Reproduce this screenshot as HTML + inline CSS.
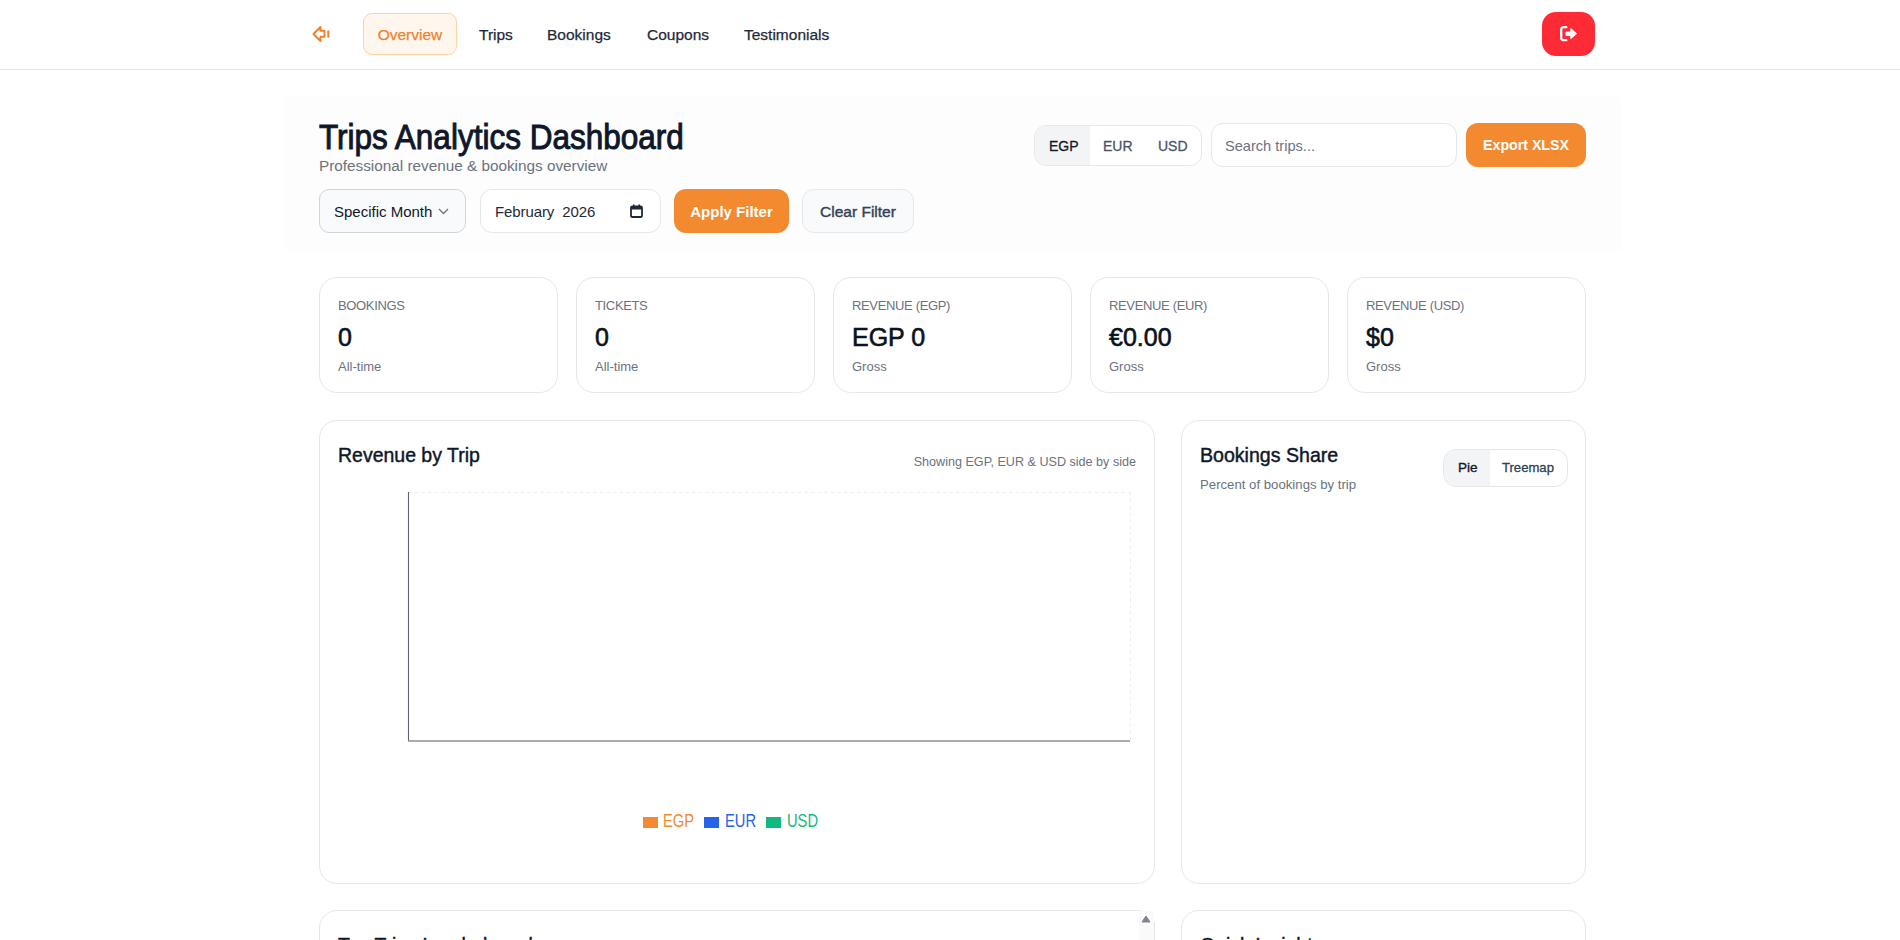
<!DOCTYPE html>
<html>
<head>
<meta charset="utf-8">
<style>
*{box-sizing:border-box;margin:0;padding:0}
html,body{width:1900px;height:940px;overflow:hidden;background:#fff}
body{font-family:"Liberation Sans",sans-serif;color:#0f172a;position:relative}
.t{position:absolute;white-space:nowrap;line-height:1}
/* nav */
.nav{position:absolute;left:0;top:0;width:1900px;height:70px;border-bottom:1px solid #e5e7eb;background:#fff}
.logo{position:absolute;left:300px;top:15px}
.pill{position:absolute;top:13.5px;height:42px;font-size:15.5px;color:#1e293b;-webkit-text-stroke:0.25px #1e293b;line-height:42px;white-space:nowrap}
.pill.active{background:#fff7ed;border:1px solid #fdd3a6;border-radius:9px;color:#f0812e;-webkit-text-stroke:0.25px #f0812e;line-height:40px}
.logout{position:absolute;left:1542px;top:12px;width:53px;height:44px;background:#fe2a36;border-radius:14px}
/* header panel */
.hdr{position:absolute;left:284px;top:97px;width:1337px;height:154px;background:#fdfdfd}
.ctl{position:absolute;height:44px;font-size:15px;line-height:42px;white-space:nowrap}
.btn-o{background:#f38a30;color:#fff;font-weight:bold;border-radius:12px;line-height:45px}
/* cards */
.card{position:absolute;background:#fff;border:1px solid #e5e7eb;border-radius:18px}
.klab{position:absolute;left:18px;top:21px;font-size:13px;color:#6b7280;letter-spacing:-0.35px;white-space:nowrap;line-height:1}
.kval{position:absolute;left:18px;top:47px;font-size:25px;font-weight:normal;-webkit-text-stroke:0.6px #0b1220;color:#0b1220;white-space:nowrap;line-height:1}
.ksub{position:absolute;left:18px;top:82px;font-size:13px;color:#6b7280;white-space:nowrap;line-height:1}
</style>
</head>
<body>
<div class="nav">
  <svg class="logo" width="45" height="40" viewBox="300 15 45 40" fill="none" stroke="#f0812e" stroke-width="2" stroke-linecap="round" stroke-linejoin="round"><path d="M328.3 31.2V36.8"/><path d="M324.5 30.8H320.5V27L313.5 34L320.5 41V36.8H324.5Z"/></svg>
  <div class="pill active" style="left:363px;top:13px;width:94px;text-align:center;line-height:41px">Overview</div>
  <div class="pill" style="left:479px">Trips</div>
  <div class="pill" style="left:547px">Bookings</div>
  <div class="pill" style="left:647px">Coupons</div>
  <div class="pill" style="left:744px">Testimonials</div>
  <div class="logout">
    <svg width="53" height="44" viewBox="0 0 53 44" style="position:absolute;left:0;top:0">
      <path d="M24.3 15.2H21.4A2.2 2.2 0 0 0 19.2 17.4V26A2.2 2.2 0 0 0 21.4 28.2H24.3" fill="none" stroke="#fff" stroke-width="2.3" stroke-linecap="round"/>
      <path d="M24 20H28.8V16.6L34.6 21.7L28.8 26.6V23.5H24Z" fill="#fff" stroke="#fff" stroke-width="1" stroke-linejoin="round"/>
    </svg>
  </div>
</div>

<div class="hdr"></div>
<div class="t" id="title" style="left:319px;top:118.5px;font-size:35px;font-weight:normal;-webkit-text-stroke:1px #0f172a;color:#0f172a;transform:scaleX(0.9);transform-origin:0 0">Trips Analytics Dashboard</div>
<div class="t" id="sub" style="left:319px;top:158px;font-size:15.3px;color:#6b7280">Professional revenue &amp; bookings overview</div>

<div class="ctl" style="left:319px;top:189px;width:147px;background:#f8fafc;border:1px solid #d1d5db;border-radius:10px;padding-left:14px;color:#111827;line-height:43px">Specific Month
  <svg width="11" height="7" viewBox="0 0 11 7" style="position:absolute;left:118px;top:18px"><path d="M1 1l4.5 4.5L10 1" fill="none" stroke="#6b7280" stroke-width="1.3"/></svg>
</div>
<div class="ctl" style="left:480px;top:189px;width:181px;background:#fff;border:1px solid #e5e7eb;border-radius:12px;padding-left:14px;color:#1f2937;line-height:43px;letter-spacing:-0.1px">February&nbsp; 2026
  <svg width="13" height="14" viewBox="0 0 13 14" style="position:absolute;left:149px;top:14px"><rect x="1" y="2.5" width="11" height="10.5" rx="1.3" fill="none" stroke="#1f2937" stroke-width="1.8"/><rect x="1" y="2.5" width="11" height="3" fill="#1f2937"/><rect x="3" y="0.5" width="1.6" height="3" fill="#1f2937"/><rect x="8.4" y="0.5" width="1.6" height="3" fill="#1f2937"/></svg>
</div>
<div class="ctl btn-o" style="left:674px;top:189px;width:115px;text-align:center">Apply Filter</div>
<div class="ctl" style="left:802px;top:189px;width:112px;background:#f8fafc;border:1px solid #e5e7eb;border-radius:12px;text-align:center;color:#334155;font-weight:normal;-webkit-text-stroke:0.4px #334155;line-height:44px;font-size:15.5px">Clear Filter</div>

<!-- right controls -->
<div class="ctl" style="left:1034px;top:125px;width:168px;height:41px;border:1px solid #e5e7eb;border-radius:12px;background:#fff;overflow:hidden">
  <div style="position:absolute;left:0;top:0;width:55px;height:39px;background:#f3f4f6"></div>
  <div class="t" style="left:14px;top:13px;font-size:14px;color:#111827;-webkit-text-stroke:0.3px #111827">EGP</div>
  <div class="t" style="left:68px;top:13px;font-size:14px;color:#475569;-webkit-text-stroke:0.3px #475569">EUR</div>
  <div class="t" style="left:123px;top:13px;font-size:14px;color:#475569;-webkit-text-stroke:0.3px #475569">USD</div>
</div>
<div class="ctl" style="left:1211px;top:123px;width:246px;height:44px;border:1px solid #e5e7eb;border-radius:12px;background:#fff">
  <div class="t" style="left:13px;top:15px;font-size:14.6px;color:#6b7280">Search trips...</div>
</div>
<div class="ctl btn-o" style="left:1466px;top:123px;width:120px;height:44px;border-radius:12px;text-align:center;font-size:14.2px;line-height:44px">Export XLSX</div>

<!-- KPI cards -->
<div class="card" style="left:319px;top:277px;width:239px;height:116px"><div class="klab">BOOKINGS</div><div class="kval">0</div><div class="ksub">All-time</div></div>
<div class="card" style="left:576px;top:277px;width:239px;height:116px"><div class="klab">TICKETS</div><div class="kval">0</div><div class="ksub">All-time</div></div>
<div class="card" style="left:833px;top:277px;width:239px;height:116px"><div class="klab">REVENUE (EGP)</div><div class="kval">EGP 0</div><div class="ksub">Gross</div></div>
<div class="card" style="left:1090px;top:277px;width:239px;height:116px"><div class="klab">REVENUE (EUR)</div><div class="kval">€0.00</div><div class="ksub">Gross</div></div>
<div class="card" style="left:1347px;top:277px;width:239px;height:116px"><div class="klab">REVENUE (USD)</div><div class="kval">$0</div><div class="ksub">Gross</div></div>

<!-- Revenue by trip -->
<div class="card" style="left:319px;top:420px;width:836px;height:464px">
  <div class="t" id="rbt" style="left:18px;top:23.8px;font-size:20.5px;font-weight:normal;-webkit-text-stroke:0.45px #0f172a;color:#0f172a;transform:scaleX(0.95);transform-origin:0 0">Revenue by Trip</div>
  <div class="t" id="rbts" style="right:18px;top:34.8px;font-size:12.6px;color:#6b7280">Showing EGP, EUR &amp; USD side by side</div>
  <svg width="836" height="464" style="position:absolute;left:-1px;top:-1px">
    <line x1="89.5" y1="72.5" x2="811.5" y2="72.5" stroke="#eceef1" stroke-width="1" stroke-dasharray="3.3 3.3"/>
    <line x1="811.5" y1="72.5" x2="811.5" y2="320" stroke="#eceef1" stroke-width="1" stroke-dasharray="3.3 3.3"/>
    <line x1="89.5" y1="72" x2="89.5" y2="321" stroke="#5f636b" stroke-width="1.1"/>
    <line x1="89" y1="321" x2="811" y2="321" stroke="#8e9196" stroke-width="1.6"/>
  </svg>
  <div style="position:absolute;left:323px;top:396px;width:15px;height:11px;background:#f28a33"></div>
  <div class="t" style="left:343px;top:392px;font-size:17.5px;color:#f28a33;transform:scaleX(0.84);transform-origin:0 0">EGP</div>
  <div style="position:absolute;left:384px;top:396px;width:15px;height:11px;background:#2563eb"></div>
  <div class="t" style="left:405px;top:392px;font-size:17.5px;color:#2563eb;transform:scaleX(0.84);transform-origin:0 0">EUR</div>
  <div style="position:absolute;left:446px;top:396px;width:15px;height:11px;background:#10b981"></div>
  <div class="t" style="left:467px;top:392px;font-size:17.5px;color:#10b981;transform:scaleX(0.84);transform-origin:0 0">USD</div>
</div>

<!-- Bookings share -->
<div class="card" style="left:1181px;top:420px;width:405px;height:464px">
  <div class="t" id="bsh" style="left:18px;top:23.8px;font-size:20.5px;font-weight:normal;-webkit-text-stroke:0.45px #0f172a;color:#0f172a;transform:scaleX(0.955);transform-origin:0 0">Bookings Share</div>
  <div class="t" id="bshs" style="left:18px;top:57px;font-size:13.2px;color:#6b7280">Percent of bookings by trip</div>
  <div style="position:absolute;left:261px;top:28px;width:125px;height:38px;border:1px solid #e5e7eb;border-radius:13px;overflow:hidden">
    <div style="position:absolute;left:0;top:0;width:46px;height:36px;background:#f3f4f6"></div>
    <div class="t" style="left:14px;top:11px;font-size:13.5px;-webkit-text-stroke:0.35px #111827;color:#111827">Pie</div>
    <div class="t" style="left:58px;top:11px;font-size:13.1px;-webkit-text-stroke:0.3px #334155;color:#334155">Treemap</div>
  </div>
</div>

<!-- bottom cards -->
<div class="card" style="left:319px;top:910px;width:836px;height:200px;overflow:hidden">
  <div class="t" style="left:18px;top:24.3px;font-size:20.5px;-webkit-text-stroke:0.45px #0f172a;color:#0f172a;transform:scaleX(0.95);transform-origin:0 0">Top Trips Leaderboard</div>
</div>
<div style="position:absolute;left:1139px;top:911px;width:15px;height:29px;background:#fafafa"></div>
<svg width="10" height="8" viewBox="0 0 10 8" style="position:absolute;left:1141px;top:914.5px"><path d="M5 1L9 7H1z" fill="#80848e" stroke="#80848e" stroke-width="1" stroke-linejoin="round"/></svg>
<div style="position:absolute;left:1154px;top:922px;width:1px;height:18px;background:#e5e7eb"></div>
<div class="card" style="left:1181px;top:910px;width:405px;height:200px;overflow:hidden">
  <div class="t" style="left:18px;top:24.3px;font-size:20.5px;-webkit-text-stroke:0.45px #0f172a;color:#0f172a;transform:scaleX(0.95);transform-origin:0 0">Quick Insights</div>
</div>
</body>
</html>
